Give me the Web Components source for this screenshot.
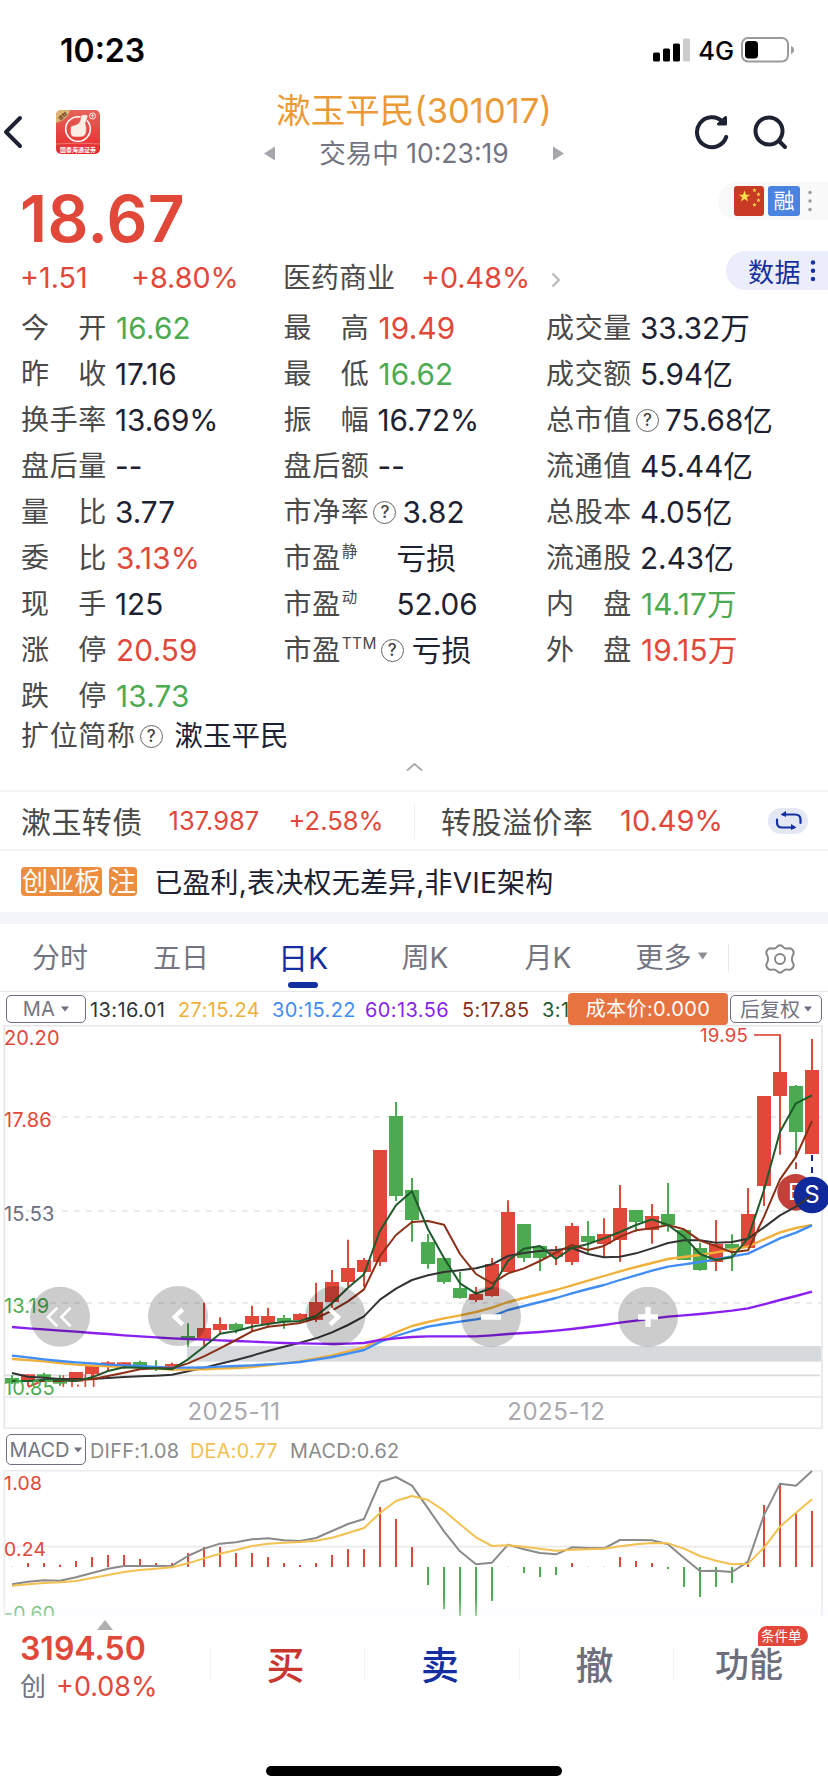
<!DOCTYPE html>
<html lang="zh-CN">
<head>
<meta charset="utf-8">
<title>漱玉平民(301017)</title>
<style>
  body {
    margin: 0;
    width: 828px;
    height: 1792px;
    overflow: hidden;
    background: #fff;
    color: #1d2233;
    font-family: Inter, "Noto Sans CJK SC", sans-serif;
    --up: #e2483a;
    --down: #4cab50;
    --ink: #1d2233;
    --label: #4a4a4a;
    --muted: #737582;
    --brand: #1430a0;
  }
</style>
</head>
<body>
<stock-page></stock-page>
<script>
const define = (name, html, setup) => {
  const template = document.createElement("template");
  template.innerHTML = html;
  window.customElements.define(name, class extends HTMLElement {
    constructor() {
      super();
      this.attachShadow({ mode: "open" });
      this.shadowRoot.append(template.content.cloneNode(true));
    }

    connectedCallback() {
      if (setup) setup(this, this.shadowRoot);
    }
  });
};

define("status-bar", `
  <style>
    :host {
      display: flex;
      align-items: center;
      height: 100px;
      box-sizing: border-box;
      padding: 0 33px 0 60px;
      color: #000;
    }
    .time { font-size: 32px; font-weight: 600; flex: 1; }
    .net { font-size: 25.5px; font-weight: 500; margin: 0 7px 0 7px; }
    svg { display: block; }
  </style>
  <span class="time">10:23</span>
  <svg width="38" height="24" viewBox="0 0 38 24">
    <rect x="0" y="14.500" width="7" height="9" rx="1.500"/>
    <rect x="10" y="10.500" width="7" height="13" rx="1.500"/>
    <rect x="20" y="5.500" width="7" height="18" rx="1.500"/>
    <rect x="30" y="0.500" width="7" height="23" rx="1.500" fill="#ccc"/>
  </svg>
  <span class="net">4G</span>
  <svg width="54" height="26" viewBox="0 0 54 26">
    <rect x="1" y="1" width="46" height="23.500" rx="6" fill="none" stroke="#9b9b9b" stroke-width="2"/>
    <rect x="4" y="4" width="13" height="17.500" rx="3.500"/>
    <path d="M50 9q3 1 3 4t-3 4z" fill="#9b9b9b"/>
  </svg>
`);

define("stock-header", `
  <style>
    :host {
      display: grid;
      grid-template-columns: 240px 348px 240px;
      height: 78px;
    }
    .left, .right { display: flex; align-items: center; height: 64px; }
    .left svg + svg { margin-left: 33px; }
    .right { padding-left: 106px; box-sizing: border-box; }
    .right svg + svg { margin-left: 22px; }
    .mid { text-align: center; }
    h1 {
      margin: -8px 0 0;
      font-size: 34.5px;
      line-height: 38px;
      font-weight: 400;
      color: #ec9a36;
      white-space: nowrap;
    }
    .sub {
      display: flex;
      justify-content: center;
      align-items: center;
      font-size: 26.500px;
      line-height: 40px;
      margin-top: 3px;
      color: var(--muted);
    }
    .sub span { width: 276px; }
  </style>
  <div class="left">
    <svg width="23" height="34" viewBox="0 0 23 34">
      <path d="M20 3L6 17l14 14" fill="none" stroke="#1d2233" stroke-width="4" stroke-linecap="round" stroke-linejoin="round"/>
    </svg>
    <svg width="44" height="44" viewBox="0 0 44 44">
      <defs>
        <linearGradient id="bg" x1="0" y1="0" x2="0" y2="1">
          <stop offset="0" stop-color="#e5635a"/>
          <stop offset="1" stop-color="#e8292b"/>
        </linearGradient>
        <clipPath id="round"><rect width="44" height="44" rx="5"/></clipPath>
      </defs>
      <g clip-path="url(#round)">
        <rect width="44" height="44" fill="url(#bg)"/>
        <path d="M0 0h14Q12 10 0 13z" fill="#dcb878"/>
        <text x="6.500" y="8" transform="rotate(-40 6.500 6)" text-anchor="middle" font-size="5" font-weight="700" fill="#6b3a1a">道财</text>
        <circle cx="22" cy="19" r="12.300" fill="none" stroke="#fff" stroke-width="1.600"/>
        <path d="M14.500 18q0-2.500 3-2.500l4-1.500q3-2 3-6 0-3.500 3.500-3.500t4 1.500l-2.500 7q1.500 4 .5 10-1 4-5 4h-6q-4.500 0-4.500-4z" fill="#fbeee4" stroke="#e65048" stroke-width=".6"/>
        <circle cx="36.500" cy="6" r="3" fill="none" stroke="#fff" stroke-width=".9"/>
        <path d="M36.500 4v4M35 5.500h3" stroke="#fff" stroke-width=".7"/>
        <path d="M0 34q22-2 44 0" stroke="#f08a80" stroke-width=".8" fill="none"/>
        <text x="22" y="41.500" text-anchor="middle" font-size="6" font-weight="700" fill="#fff">国泰海通证券</text>
      </g>
    </svg>
  </div>
  <div class="mid">
    <h1>漱玉平民(301017)</h1>
    <div class="sub">
      <svg width="12" height="15" viewBox="0 0 12 15"><path d="M0 7.500L11 0.500v14z" fill="#a6a7ad"/></svg>
      <span>交易中 10:23:19</span>
      <svg width="12" height="15" viewBox="0 0 12 15"><path d="M12 7.500L1 0.500v14z" fill="#a6a7ad"/></svg>
    </div>
  </div>
  <div class="right">
    <svg width="36" height="38" viewBox="0 0 36 38" fill="none" stroke="#1d2233" stroke-width="4" stroke-linecap="round">
      <path d="M32.200 24A15 15 0 1 1 28.500 8.500"/>
      <path d="M31.500 4.500v6.500h-7z" fill="#1d2233" stroke-width="3" stroke-linejoin="round"/>
    </svg>
    <svg width="36" height="36" viewBox="0 0 36 36" fill="none" stroke="#1d2233" stroke-width="4" stroke-linecap="round">
      <circle cx="17" cy="17" r="13.500"/>
      <path d="M27 27l6 6"/>
    </svg>
  </div>
`);

define("price-summary", `
  <style>
    :host { display: flex; height: 122px; }
    .main { flex: 1; padding-left: 20px; }
    .price {
      font-size: 64px;
      font-weight: 600;
      line-height: 82px;
      letter-spacing: 0.4px;
      color: var(--up);
    }
    .row {
      display: flex;
      align-items: baseline;
      font-size: 28.700px;
      line-height: 36px;
      color: var(--up);
    }
    .row > * { flex: none; box-sizing: border-box; }
    .chg { width: 111px; }
    .pct { width: 152px; }
    .sector { width: 138px; font-size: 28px; color: var(--label); }
    .spct { width: 130px; }
    .side { display: flex; flex-direction: column; align-items: flex-end; }
    .tags, .data { display: flex; align-items: center; box-sizing: border-box; }
    .tags {
      width: 110px;
      height: 38px;
      margin-top: 4px;
      padding-left: 16px;
      gap: 4px;
      border-radius: 19px 0 0 19px;
      background: #f9f9f9;
    }
    .margin {
      width: 32px;
      height: 30px;
      border-radius: 3px;
      background: #4b83e0;
      color: #fff;
      font-size: 21px;
      line-height: 30px;
      text-align: center;
    }
    .data {
      width: 102px;
      height: 39px;
      margin-top: 31px;
      padding-left: 22px;
      border-radius: 20px 0 0 20px;
      background: #ecedfb;
      color: var(--brand);
      font-size: 26px;
      letter-spacing: 0.4px;
    }
  </style>
  <div class="main">
    <div class="price">18.67</div>
    <div class="row">
      <span class="chg">+1.51</span>
      <span class="pct">+8.80%</span>
      <span class="sector">医药商业</span>
      <span class="spct">+0.48%</span>
      <svg width="10" height="16" viewBox="0 0 10 16"><path d="M1.500 1.500L8 8l-6.500 6.500" fill="none" stroke="#b5b5b5" stroke-width="2"/></svg>
    </div>
  </div>
  <div class="side">
    <div class="tags">
      <svg width="30" height="30" viewBox="0 0 30 30">
        <rect width="30" height="30" rx="3" fill="#c93a25"/>
        <g fill="#fbe04a">
          <path d="M10.500 4.500l1.500 4.200h4.300l-3.500 2.600 1.300 4.300-3.600-2.600-3.600 2.600 1.300-4.300-3.500-2.600h4.300z"/>
          <path d="M20.500 2l.6 1.500 1.500.1-1.200 1 .4 1.600-1.300-.9-1.400.9.400-1.600-1.200-1 1.600-.1z"/>
          <path d="M24.500 6l.6 1.500 1.500.1-1.200 1 .4 1.600-1.300-.9-1.400.9.400-1.600-1.200-1 1.600-.1z"/>
          <path d="M24.500 12l.6 1.500 1.500.1-1.200 1 .4 1.600-1.300-.9-1.400.9.400-1.600-1.200-1 1.600-.1z"/>
          <path d="M20.500 16.500l.6 1.500 1.500.1-1.200 1 .4 1.600-1.300-.9-1.400.9.400-1.600-1.200-1 1.600-.1z"/>
        </g>
      </svg>
      <div class="margin">融</div>
      <svg width="12" height="22" viewBox="0 0 12 22" fill="#999"><circle cx="6" cy="2.500" r="1.700"/><circle cx="6" cy="11" r="1.700"/><circle cx="6" cy="19.500" r="1.700"/></svg>
    </div>
    <div class="data">
      <span>数据</span>
      <svg width="22" height="24" viewBox="0 0 22 24" fill="#1430a0"><circle cx="12" cy="3.500" r="2.200"/><circle cx="12" cy="11.800" r="2.200"/><circle cx="12" cy="20" r="2.200"/></svg>
    </div>
  </div>
`);

define("help-mark", `
  <style>
    :host {
      display: inline-flex;
      flex: none;
      align-items: center;
      justify-content: center;
      width: 23px;
      height: 23px;
      box-sizing: border-box;
      border: 1.300px solid #666;
      border-radius: 50%;
      font-size: 17px;
      line-height: 1;
      color: #444;
      font-weight: 500;
    }
  </style>?
`);

define("quote-cell", `
  <style>
    :host {
      display: flex;
      align-items: center;
      height: 46px;
      white-space: nowrap;
      line-height: 46px;
    }
    .label { font-size: 28px; letter-spacing: 0.650px; color: var(--label); min-width: 86px; }
    sup {
      font-size: 15.500px;
      line-height: 1;
      letter-spacing: 0.3px;
      vertical-align: 11px;
      margin-left: 1px;
    }
    .value { font-size: var(--size, 29.700px); color: var(--ink); margin-left: var(--gap, 8px); }
    :host([tone]) .value { margin-left: 9px; letter-spacing: 0.2px; }
    :host([tone="up"]) .value { color: var(--up); }
    :host([tone="down"]) .value { color: var(--down); }
    help-mark { margin-left: 4px; }
    :host(:not([help])) help-mark { display: none; }
    :host([help]) .label { min-width: 0; }
  </style>
  <span class="label"></span><help-mark></help-mark><span class="value"><slot></slot></span>
`, (host, root) => {
  const label = root.querySelector(".label");
  label.textContent = host.getAttribute("label");
  const mark = host.getAttribute("sup");
  if (mark) {
    const sup = document.createElement("sup");
    sup.textContent = mark;
    label.append(sup);
  }
});

define("quote-grid", `
  <style>
    :host { display: block; height: 490px; padding-left: 21px; }
    .cols { display: grid; grid-template-columns: 262.500px 262.500px 1fr; height: 414px; padding-top: 5px; }
    .last { height: 34px; line-height: 34px; --gap: 12px; --size: 28.500px; }
    .fold { display: flex; justify-content: center; padding-right: 21px; margin-top: 9px; }
  </style>
  <div class="cols">
    <div>
      <quote-cell label="今　开" tone="down">16.62</quote-cell>
      <quote-cell label="昨　收">17.16</quote-cell>
      <quote-cell label="换手率">13.69%</quote-cell>
      <quote-cell label="盘后量">--</quote-cell>
      <quote-cell label="量　比">3.77</quote-cell>
      <quote-cell label="委　比" tone="up">3.13%</quote-cell>
      <quote-cell label="现　手">125</quote-cell>
      <quote-cell label="涨　停" tone="up">20.59</quote-cell>
      <quote-cell label="跌　停" tone="down">13.73</quote-cell>
    </div>
    <div>
      <quote-cell label="最　高" tone="up">19.49</quote-cell>
      <quote-cell label="最　低" tone="down">16.62</quote-cell>
      <quote-cell label="振　幅">16.72%</quote-cell>
      <quote-cell label="盘后额">--</quote-cell>
      <quote-cell label="市净率" help style="--gap: 6px">3.82</quote-cell>
      <quote-cell label="市盈" sup="静" style="--gap: 27px">亏损</quote-cell>
      <quote-cell label="市盈" sup="动" style="--gap: 27px">52.06</quote-cell>
      <quote-cell label="市盈" sup="TTM" help>亏损</quote-cell>
    </div>
    <div>
      <quote-cell label="成交量">33.32万</quote-cell>
      <quote-cell label="成交额">5.94亿</quote-cell>
      <quote-cell label="总市值" help style="--gap: 6px">75.68亿</quote-cell>
      <quote-cell label="流通值">45.44亿</quote-cell>
      <quote-cell label="总股本">4.05亿</quote-cell>
      <quote-cell label="流通股">2.43亿</quote-cell>
      <quote-cell label="内　盘" tone="down">14.17万</quote-cell>
      <quote-cell label="外　盘" tone="up">19.15万</quote-cell>
    </div>
  </div>
  <quote-cell class="last" label="扩位简称" help>漱玉平民</quote-cell>
  <div class="fold">
    <svg width="17" height="10" viewBox="0 0 17 10"><path d="M1 8.500l7.500-6.500 7.500 6.500" fill="none" stroke="#aaa" stroke-width="1.800"/></svg>
  </div>
`);

define("bond-row", `
  <style>
    :host {
      display: flex;
      align-items: center;
      height: 61px;
      box-sizing: border-box;
      padding: 0 20px 0 21px;
      border-top: 2px solid #f5f5f8;
      border-bottom: 2px solid #f5f5f8;
      color: var(--up);
      white-space: nowrap;
    }
    :host > * { flex: none; }
    .name { font-size: 30px; letter-spacing: 0.4px; color: var(--label); margin-top: -2px; }
    .px { width: 120px; margin-left: 26px; font-size: 25.500px; }
    .pct { width: 125px; font-size: 25.500px; }
    i { width: 1.500px; height: 36px; background: #f0f0f3; margin-right: 26px; }
    .rate { margin-left: 27px; font-size: 29px; flex: 1; }
  </style>
  <span class="name">漱玉转债</span>
  <span class="px">137.987</span>
  <span class="pct">+2.58%</span>
  <i></i>
  <span class="name">转股溢价率</span>
  <span class="rate">10.49%</span>
  <svg width="40" height="26" viewBox="0 0 40 26">
    <rect width="40" height="26" rx="13" fill="#e4e8f5"/>
    <g fill="none" stroke="#1430a0" stroke-width="2.200" stroke-linecap="round">
      <path d="M15 6.500h12q5.500 0 5.500 5v3.500"/>
      <path d="M26 19.500H14q-5 0-5-5v-3"/>
    </g>
    <path d="M12.500 6.500l5.500-3.500v6zM28.500 19.500L23 16v6z" fill="#1430a0"/>
  </svg>
`);

define("board-note", `
  <style>
    :host {
      display: flex;
      align-items: center;
      height: 61px;
      padding-left: 21px;
      border-bottom: 12px solid #f3f5fa;
      font-size: 28px;
      white-space: nowrap;
    }
    b {
      height: 29px;
      line-height: 29px;
      padding: 0 1px;
      margin-right: 7px;
      border-radius: 4px;
      background: #ec8e3f;
      color: #fff;
      font-size: 26px;
      font-weight: 400;
      letter-spacing: 0.3px;
    }
    span { margin: -2px 0 0 10px; letter-spacing: 0.2px; }
  </style>
  <b>创业板</b><b>注</b><span>已盈利,表决权无差异,非VIE架构</span>
`);

define("period-tab", `
  <style>
    :host {
      display: flex;
      align-items: center;
      justify-content: center;
      position: relative;
      box-sizing: border-box;
      height: 67px;
      padding-bottom: 4px;
      color: var(--muted);
      font-size: 28px;
    }
    :host([active]) { color: var(--brand); font-size: 30px; }
    :host([active])::after {
      content: "";
      position: absolute;
      left: calc(50% - 15px);
      bottom: 3px;
      width: 30px;
      height: 6px;
      border-radius: 3px;
      background: var(--brand);
    }
  </style>
  <slot></slot>
`);

define("period-tabs", `
  <style>
    :host {
      display: grid;
      grid-template-columns: 120px 122px 122px 122px 124px 118px 100px;
      align-items: center;
      height: 68px;
      border-bottom: 1px solid #e6e6e8;
      box-sizing: border-box;
    }
    .more { padding-left: 5px; }
    .caret { margin-left: 6px; }
    .gear {
      display: flex;
      justify-content: center;
      height: 28px;
      padding-left: 2px;
      border-left: 1.500px solid #e6e6ea;
    }
  </style>
  <period-tab>分时</period-tab>
  <period-tab>五日</period-tab>
  <period-tab active>日K</period-tab>
  <period-tab>周K</period-tab>
  <period-tab>月K</period-tab>
  <period-tab class="more">更多<svg class="caret" width="10" height="8" viewBox="0 0 10 8"><path d="M0 .5h9.500L4.700 7.500z" fill="#8f8f93"/></svg></period-tab>
  <div class="gear">
    <svg width="30" height="30" viewBox="0 0 30 30" fill="none" stroke="#858588" stroke-width="1.900">
      <path d="M11.500 3.300Q15-.8 18.500 3.300q1.300 1.400 3.500 1.200l3.500-.2q3.500 1.500 3.200 5.200l-1.400 3q-.8 2.500 0 5l1.400 3q.3 3.700-3.200 5.200l-3.500-.2q-2.200-.2-3.500 1.200-3.500 4.100-7 0-1.300-1.400-3.500-1.200l-3.500.2q-3.500-1.500-3.200-5.200l1.400-3q.8-2.500 0-5l-1.400-3q-.3-3.700 3.200-5.200l3.500.2q2.200.2 3.500-1.200z"/>
      <circle cx="15" cy="15" r="5"/>
    </svg>
  </div>
`);

define("pick-button", `
  <style>
    :host {
      display: flex;
      flex: none;
      align-items: center;
      justify-content: center;
      gap: 6px;
      box-sizing: border-box;
      border: 1.500px solid #6d6f80;
      border-radius: 5px;
      color: var(--muted);
      font-size: 20px;
      white-space: nowrap;
      background: #fff;
    }
  </style>
  <slot></slot>
  <svg width="8" height="6" viewBox="0 0 8 6"><path d="M0 .5h8L4 5.500z" fill="#6d6f80"/></svg>
`);

define("ma-legend", `
  <style>
    :host {
      display: flex;
      align-items: center;
      height: 33px;
      padding: 0 6px;
      font-size: 20px;
      letter-spacing: 0.4px;
      white-space: nowrap;
    }
    .ma { width: 80px; height: 28px; }
    .list { display: flex; width: 482px; overflow: hidden; padding: 2px 0 0 4px; box-sizing: border-box; }
    .list span { flex: none; }
    .cost {
      flex: none;
      width: 160px;
      height: 32px;
      border-radius: 4px;
      background: #e77440;
      color: #fff;
      line-height: 32px;
      text-align: center;
    }
    .adj { width: 92px; height: 28px; margin-left: 2px; gap: 4px; letter-spacing: 0; }
  </style>
  <pick-button class="ma">MA</pick-button>
  <div class="list">
    <span style="width: 88px; color: #333">13:16.01</span>
    <span style="width: 94px; color: #f0b03a">27:15.24</span>
    <span style="width: 93px; color: #3f8df5">30:15.22</span>
    <span style="width: 97px; color: #8a1ff0">60:13.56</span>
    <span style="width: 80px; color: #8b2f17">5:17.85</span>
    <span style="color: #1e5a2c">3:1</span>
  </div>
  <div class="cost">成本价:0.000</div>
  <pick-button class="adj">后复权</pick-button>
`);

// Series are given in 3x device pixels, one step of 48 per trading day.
const STEP = 48;
const dayX = (i) => 36 + STEP * i;
const UP = "#e2483a";
const DOWN = "#4cab50";

// [direction, body top, body bottom, high, low]
const CANDLES = [
  ["d", 1074, 1090, 1066, 1092], ["u", 1063, 1084, 1063, 1098], ["d", 1063, 1072, 1058, 1078],
  ["d", 1085, 1091, 1066, 1097], ["u", 1056, 1085, 1056, 1085], ["u", 1038, 1062, 1038, 1078],
  ["u", 1027, 1041, 1024, 1053], ["u", 1027, 1035, 1027, 1046], ["d", 1026, 1040, 1022, 1042],
  ["d", 1043, 1047, 1021, 1053], ["u", 1032, 1045, 1028, 1050], ["d", 948, 954, 910, 980],
  ["u", 924, 957, 848, 977], ["u", 912, 930, 892, 940], ["d", 912, 930, 908, 940],
  ["u", 888, 912, 857, 935], ["u", 888, 912, 863, 918], ["d", 894, 905, 885, 926],
  ["u", 882, 900, 880, 905], ["u", 846, 900, 788, 906], ["u", 786, 846, 750, 864],
  ["u", 744, 786, 659, 800], ["u", 720, 756, 714, 800], ["u", 390, 726, 390, 738],
  ["d", 288, 528, 246, 543], ["d", 510, 600, 474, 665], ["d", 666, 732, 642, 746],
  ["d", 714, 786, 714, 791], ["d", 804, 834, 756, 836], ["u", 822, 840, 801, 846],
  ["u", 732, 828, 714, 830], ["u", 576, 756, 541, 756], ["d", 612, 714, 612, 726],
  ["d", 678, 714, 678, 753], ["u", 694, 710, 678, 735], ["u", 618, 726, 609, 735],
  ["d", 648, 666, 603, 700], ["u", 642, 672, 595, 712], ["u", 564, 660, 495, 726],
  ["d", 570, 606, 570, 635], ["u", 588, 630, 552, 671], ["d", 582, 615, 489, 635],
  ["d", 630, 720, 630, 720], ["d", 684, 750, 668, 752], ["u", 672, 726, 600, 753],
  ["d", 672, 686, 643, 753], ["u", 582, 684, 504, 684], ["u", 228, 498, 228, 558],
  ["u", 156, 228, 45, 404], ["d", 198, 336, 195, 395], ["u", 150, 402, 57, 402],
];

const MA3 = [1083, 1083, 1079, 1080, 1083, 1072, 1053, 1042, 1043, 1045, 1048, 1018, 980, 941, 933, 920, 912, 905, 903, 888, 850, 803, 763, 632, 556, 514, 628, 714, 790, 821, 804, 722, 686, 678, 717, 684, 672, 655, 636, 615, 598, 615, 650, 702, 720, 712, 655, 510, 335, 250, 226];
const MA5 = [1083, 1083, 1083, 1083, 1080, 1078, 1068, 1058, 1048, 1045, 1045, 1030, 1009, 985, 960, 934, 920, 915, 909, 895, 872, 844, 808, 708, 645, 606, 603, 614, 702, 762, 790, 760, 745, 723, 698, 675, 690, 678, 650, 631, 625, 615, 628, 662, 678, 697, 691, 590, 478, 410, 303];
const MA13 = [1059, 1070, 1073, 1077, 1077, 1077, 1074, 1071, 1069, 1067, 1064, 1054, 1043, 1031, 1020, 1007, 993, 980, 968, 955, 937, 915, 889, 839, 806, 780, 766, 756, 751, 745, 733, 708, 699, 693, 690, 684, 702, 712, 710, 700, 685, 669, 661, 661, 668, 666, 656, 622, 586, 560, 526];
const MA27 = [1017, 1020, 1024, 1029, 1034, 1037, 1039, 1041, 1043, 1046, 1049, 1049, 1048, 1046, 1044, 1041, 1036, 1030, 1024, 1015, 1006, 994, 982, 958, 937, 918, 906, 895, 886, 876, 863, 846, 834, 822, 810, 796, 782, 768, 754, 741, 729, 717, 711, 705, 697, 689, 680, 658, 637, 624, 615];
const MA30 = [1007, 1012, 1018, 1023, 1027, 1030, 1034, 1036, 1038, 1041, 1043, 1043, 1042, 1040, 1038, 1036, 1033, 1030, 1026, 1019, 1011, 1001, 990, 966, 948, 933, 920, 912, 905, 898, 889, 870, 858, 846, 834, 820, 807, 795, 780, 766, 752, 740, 733, 726, 718, 709, 701, 678, 655, 638, 616];
const MA60 = [921, 925, 928, 932, 935, 939, 942, 946, 949, 952, 955, 957, 959, 961, 963, 965, 967, 969, 970, 971, 972, 971, 969, 960, 955, 951, 949, 949, 949, 949, 946, 942, 939, 936, 932, 927, 921, 915, 908, 902, 896, 890, 886, 882, 877, 872, 865, 853, 840, 828, 815];

const DIFF = [493, 485, 481, 482, 472, 459, 446, 438, 438, 438, 437, 408, 386, 371, 367, 358, 355, 361, 363, 354, 333, 312, 297, 186, 171, 197, 265, 334, 394, 433, 428, 374, 388, 399, 403, 382, 384, 385, 360, 360, 361, 373, 414, 453, 452, 456, 425, 285, 191, 197, 153];
const DEA = [497, 493, 489, 487, 483, 474, 465, 456, 450, 446, 442, 430, 415, 401, 390, 378, 371, 368, 366, 362, 353, 339, 324, 279, 243, 228, 240, 272, 313, 352, 378, 376, 380, 386, 392, 389, 388, 386, 379, 373, 369, 370, 386, 408, 422, 433, 431, 383, 320, 278, 238];
const BARS = [440, 429, 429, 434, 423, 411, 405, 405, 417, 429, 429, 399, 381, 381, 399, 399, 411, 429, 435, 429, 405, 387, 387, 261, 297, 381, 495, 568, 640, 640, 543, 440, 459, 471, 465, 429, 440, 440, 411, 423, 429, 447, 501, 531, 501, 489, 433, 255, 189, 278, 273];

const polyline = (ys, color, width) =>
  `<polyline fill="none" stroke="${color}" stroke-width="${width}" stroke-linejoin="round" points="${ys.map((y, i) => `${dayX(i)},${y}`).join(" ")}"/>`;

const candle = ([kind, top, bottom, high, low], i) => {
  const color = kind === "u" ? UP : DOWN;
  const x = dayX(i);
  return `<path d="M${x} ${high}V${low}" stroke="${color}" stroke-width="6"/>
    <rect x="${x - 21}" y="${top}" width="42" height="${bottom - top}" fill="${color}"/>`;
};

const dashes = (y) => `<path d="M42 ${y}H2463" stroke="#e6e6e8" stroke-width="5" stroke-dasharray="18 18"/>`;

define("k-chart", `
  <style>
    :host { display: block; height: 404px; }
    svg { display: block; }
    .axis { font-size: 60px; letter-spacing: 0.5px; }
  </style>
  <svg width="828" height="404" viewBox="0 15 2484 1212">
    <g fill="none" stroke="#e6e6e8" stroke-width="5">
      <path d="M13 1227V17H2466V1227"/>
      <path d="M13 1131H2466M13 1225H2466"/>
      <path d="M13 1066H2460" stroke="#dcdcde"/>
    </g>
    ${dashes(291)}${dashes(573)}${dashes(849)}
    <rect x="561" y="978" width="1902" height="47" fill="#d7dadd"/>
    <path d="M84 1101l46-20" stroke="${UP}" stroke-width="6"/>
    <path d="M190 1066v35M216 1066v35M256 1062v39M281 1062v39M231 1097h6" stroke="${UP}" stroke-width="5"/>
    <g id="candles"></g>
    <path d="M2262 45H2343" stroke="${UP}" stroke-width="5"/>
    <text x="2100" y="65" font-size="56" letter-spacing=".8" fill="${UP}">19.95</text>
    <path d="M2388 393V447" stroke="#c2403a" stroke-width="6" stroke-dasharray="20 14"/>
    <path d="M2436 405V470" stroke="#102a9c" stroke-width="6" stroke-dasharray="18 18"/>
    <circle cx="2387" cy="517" r="55" fill="#c2403a"/>
    <text x="2364" y="541" font-size="70" fill="#fff">B</text>
    <circle cx="2436" cy="525" r="55" fill="#102a9c"/>
    <text x="2436" y="549" font-size="72" fill="#fff" text-anchor="middle">S</text>
    <g id="lines"></g>
    <g class="axis">
      <text x="12" y="75" fill="${UP}">20.20</text>
      <text x="12" y="321" fill="${UP}">17.86</text>
      <text x="12" y="603" fill="#6d6f80">15.53</text>
      <text x="12" y="879" fill="${DOWN}">13.19</text>
      <text x="12" y="1125" fill="${DOWN}">10.85</text>
    </g>
    <g fill="#000" fill-opacity=".2">
      <circle cx="180" cy="890" r="90"/>
      <circle cx="534" cy="888" r="90"/>
      <circle cx="1006" cy="888" r="90"/>
      <circle cx="1473" cy="890" r="90"/>
      <circle cx="1944" cy="890" r="90"/>
    </g>
    <g fill="none" stroke="#fff">
      <path d="M172 863l-28 28 28 28M212 863l-28 28 28 28" stroke-width="8"/>
      <path d="M548 868l-24 23 24 23M990 868l24 23-24 23" stroke-width="13"/>
      <path d="M1443 891h60M1914 891h60M1944 861v60" stroke-width="16"/>
    </g>
    <g font-size="72" fill="#a9a9ae" text-anchor="middle" letter-spacing="1.500">
      <text x="702" y="1200">2025-11</text>
      <text x="1669" y="1200">2025-12</text>
    </g>
  </svg>
`, (host, root) => {
  root.querySelector("#candles").innerHTML = CANDLES.map(candle).join("");
  root.querySelector("#lines").innerHTML = [
    polyline(MA13, "#333", 6),
    polyline(MA27, "#f0b03a", 7),
    polyline(MA30, "#3f8df5", 7),
    polyline(MA60, "#8a1ff0", 7),
    polyline(MA5, "#8b2f17", 6),
    polyline(MA3, "#1e5a2c", 6),
  ].join("");
});

define("macd-chart", `
  <style>
    :host { display: block; height: 187px; overflow: hidden; }
    .legend {
      display: flex;
      align-items: center;
      height: 41px;
      padding-left: 6px;
      font-size: 19.800px;
      letter-spacing: 0.3px;
      color: #8a8a8a;
    }
    pick-button { width: 80px; height: 31px; gap: 5px; letter-spacing: -0.1px; margin-right: 4px; }
    .legend span { width: 100px; padding-top: 3px; }
    svg { display: block; }
  </style>
  <div class="legend">
    <pick-button>MACD</pick-button>
    <span>DIFF:1.08</span>
    <span style="color: #f3c14f">DEA:0.77</span>
    <span style="white-space: nowrap">MACD:0.62</span>
  </div>
  <svg width="828" height="146" viewBox="0 150 2484 438">
    <defs>
      <linearGradient id="fade" x1="0" y1="0" x2="0" y2="1">
        <stop offset="0" stop-color="#fafaff" stop-opacity="0"/>
        <stop offset="1" stop-color="#fafaff" stop-opacity=".5"/>
      </linearGradient>
    </defs>
    <path d="M13 588V152H2466V588M13 380H2466" fill="none" stroke="#ebebed" stroke-width="5"/>
    <g id="bars"></g>
    <g id="lines"></g>
    <g font-size="58" letter-spacing=".8">
      <text x="12" y="210" fill="${UP}">1.08</text>
      <text x="12" y="408" fill="${UP}">0.24</text>
      <text x="12" y="600" fill="${DOWN}">-0.60</text>
    </g>
    <rect x="0" y="530" width="2484" height="58" fill="url(#fade)"/>
  </svg>
`, (host, root) => {
  root.querySelector("#lines").innerHTML = polyline(DIFF, "#8a8a8a", 6) + polyline(DEA, "#f3c14f", 6);
  root.querySelector("#bars").innerHTML = BARS.map((y, i) =>
    `<path d="M${dayX(i)} 441V${y}" stroke="${y < 440 ? UP : DOWN}" stroke-width="6"/>`).join("");
});

define("trade-bar", `
  <style>
    :host {
      display: grid;
      grid-template-columns: 210px 154px 155px 154px 155px;
      height: 110px;
      padding-bottom: 40px;
      white-space: nowrap;
    }
    .index { padding-left: 20px; }
    .tri { display: block; margin: 4px 0 0 77px; }
    .points { font-size: 32px; line-height: 38px; font-weight: 600; color: var(--up); }
    .chg { display: flex; gap: 10px; font-size: 27px; line-height: 37px; color: var(--up); }
    .chg span { font-size: 26px; color: var(--muted); }
    .act {
      display: flex;
      align-items: center;
      justify-content: center;
      box-sizing: border-box;
      height: 32px;
      margin-top: 32px;
      padding: 0 4px 4px 0;
      border-left: 1.500px solid #f1f2f7;
      font-size: 38px;
      font-weight: 500;
      color: #6d6f7c;
      position: relative;
    }
    .badge {
      position: absolute;
      left: 84px;
      top: -22px;
      width: 50px;
      height: 20px;
      border-radius: 9px 10px 10px 0;
      background: var(--up);
      color: #fff;
      font-size: 13.500px;
      font-weight: 400;
      line-height: 20px;
      text-indent: 3px;
    }
  </style>
  <div class="index">
    <svg class="tri" width="16" height="10" viewBox="0 0 16 10"><path d="M8 0l8 10H0z" fill="#b0b0b0"/></svg>
    <div class="points">3194.50</div>
    <div class="chg"><span>创</span>+0.08%</div>
  </div>
  <div class="act" style="color: #c8362f">买</div>
  <div class="act" style="color: #1430a0">卖</div>
  <div class="act">撤</div>
  <div class="act" style="font-size: 34px">功能<div class="badge">条件单</div></div>
`);

define("stock-page", `
  <style>
    :host { display: flex; flex-direction: column; width: 828px; height: 1792px; }
    :host > * { flex: none; }
    .home { width: 296px; height: 10px; border-radius: 5px; background: #000; margin: 0 auto; }
  </style>
  <status-bar></status-bar>
  <stock-header></stock-header>
  <price-summary></price-summary>
  <quote-grid></quote-grid>
  <bond-row></bond-row>
  <board-note></board-note>
  <period-tabs></period-tabs>
  <ma-legend></ma-legend>
  <k-chart></k-chart>
  <macd-chart></macd-chart>
  <trade-bar></trade-bar>
  <div class="home"></div>
`);
</script>
</body>
</html>
